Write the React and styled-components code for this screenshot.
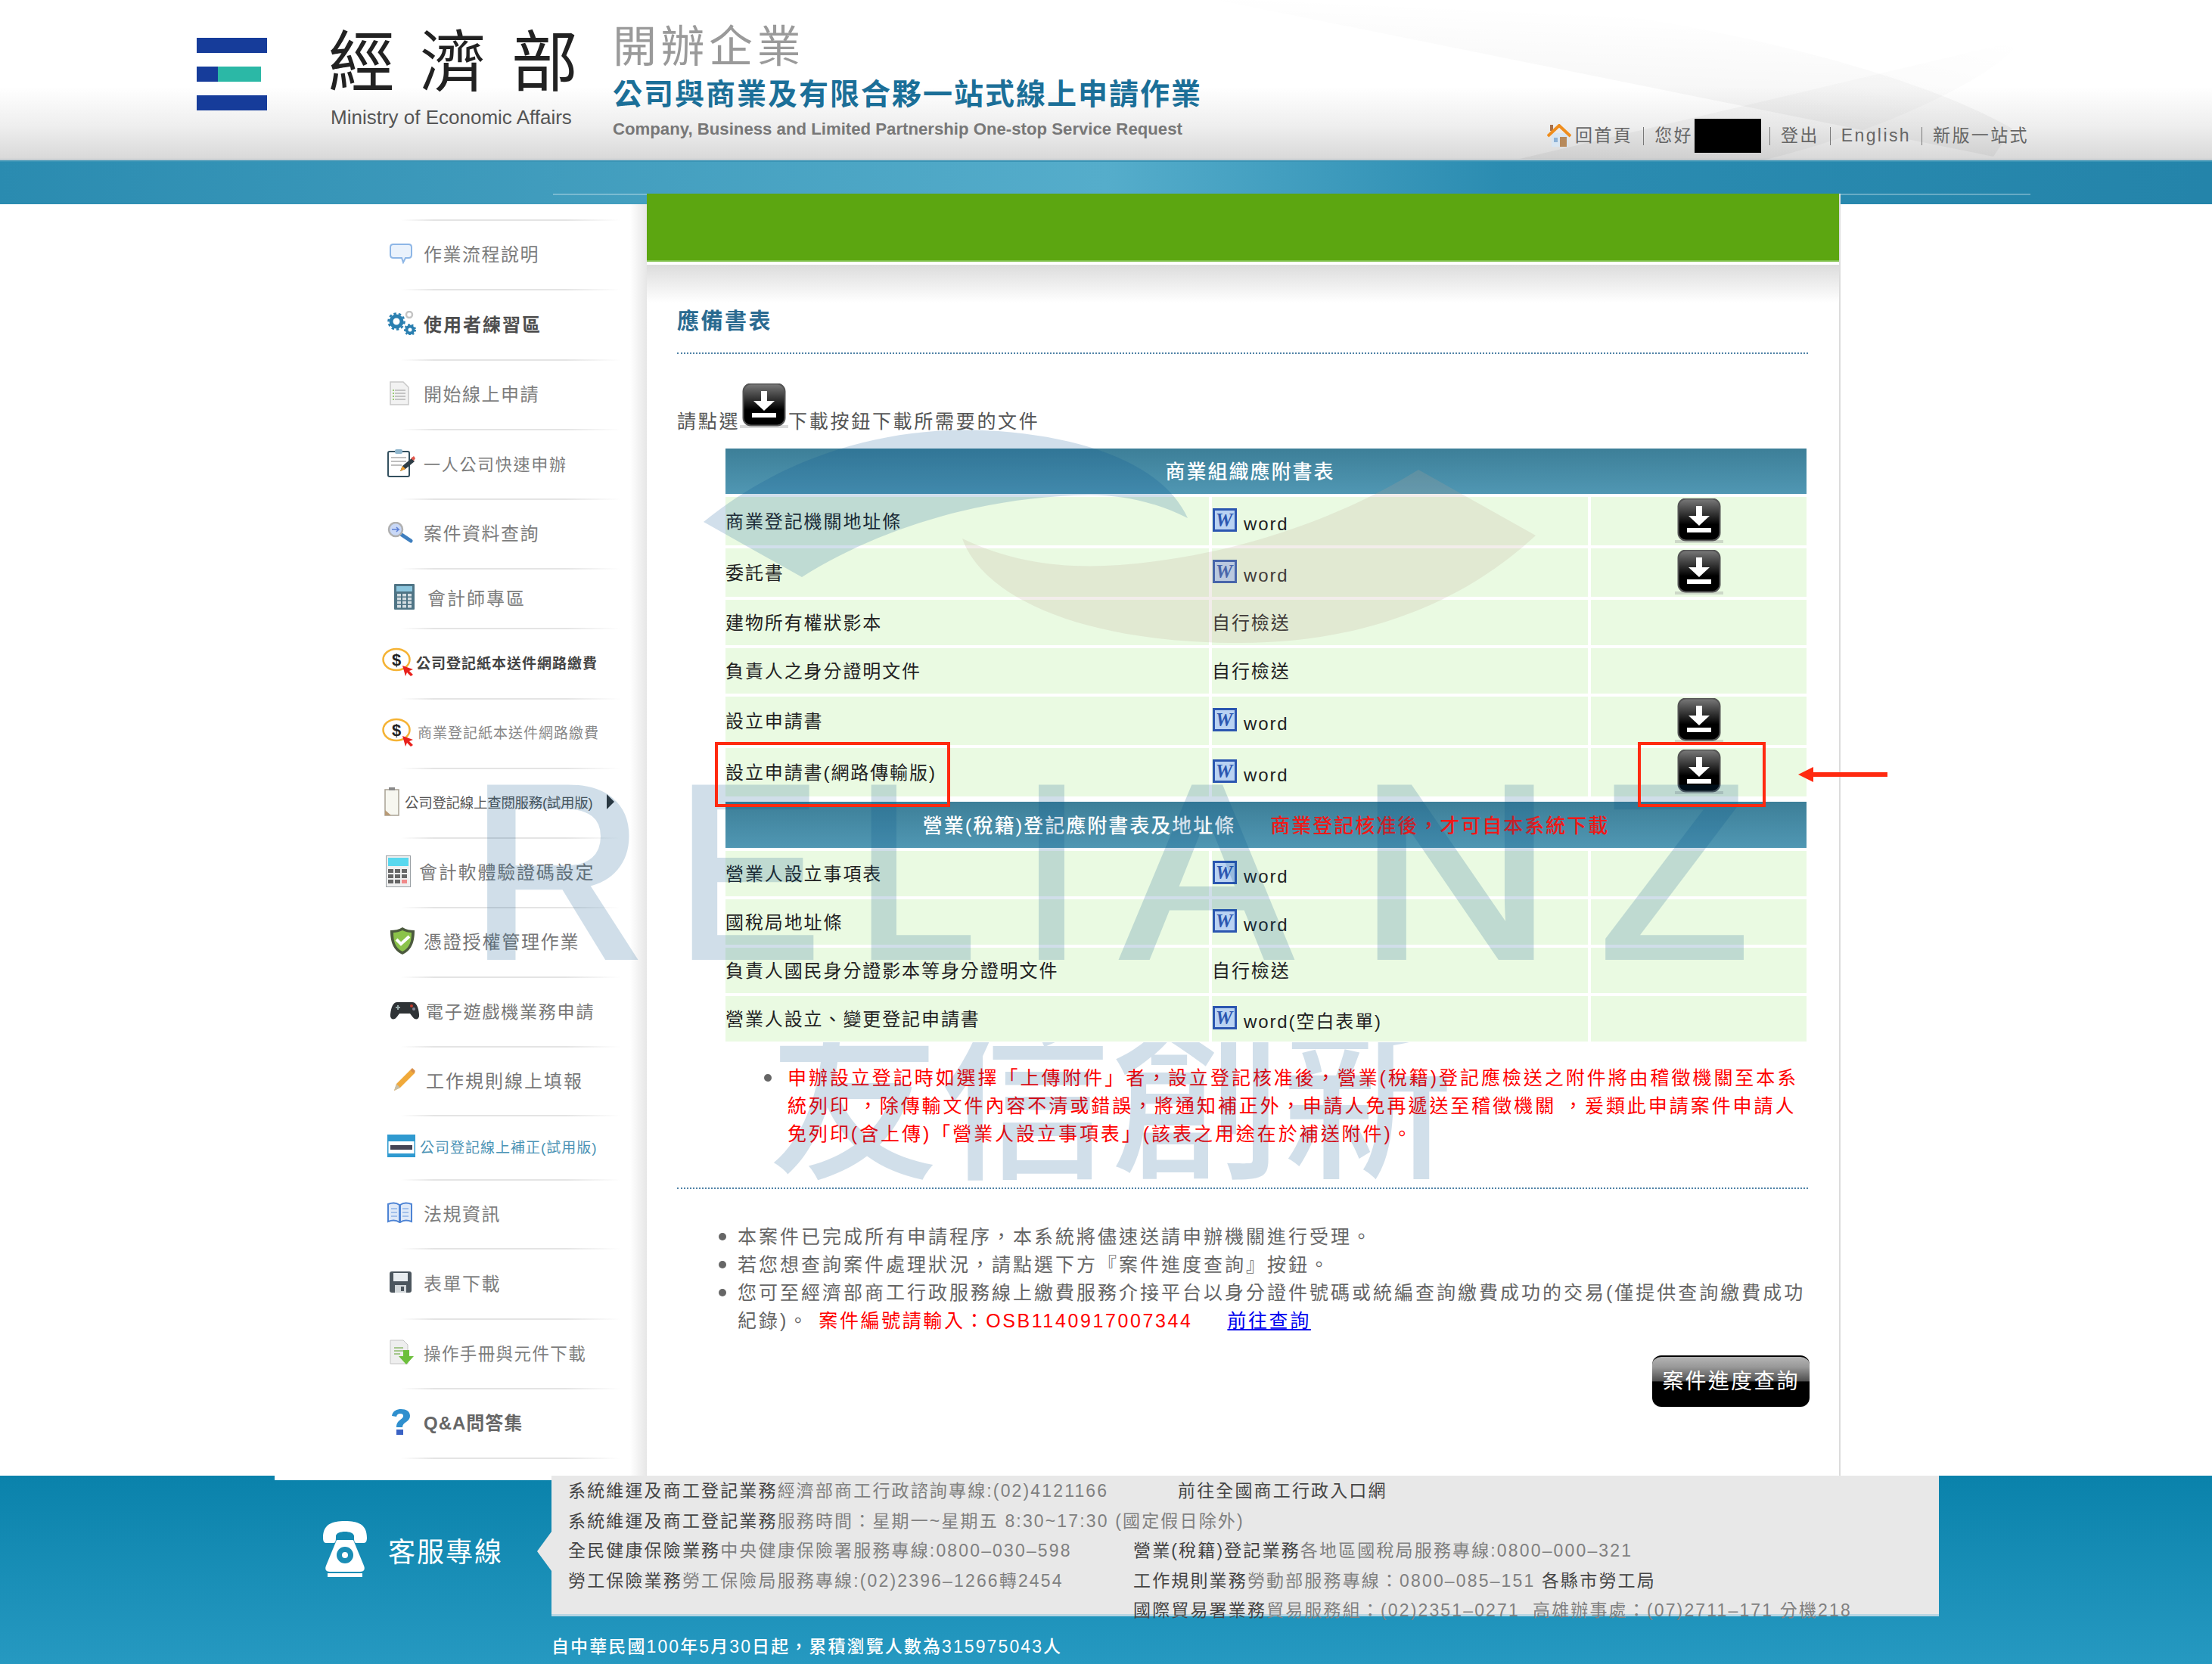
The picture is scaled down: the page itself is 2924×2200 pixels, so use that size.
import React from 'react'
import styled, { createGlobalStyle } from 'styled-components'

const CJK = '"Liberation Sans", "Noto Sans CJK TC", sans-serif'

const GlobalStyle = createGlobalStyle`
  html, body {
    margin: 0;
    padding: 0;
    background: #fff;
    font-family: ${CJK};
  }
  * {
    box-sizing: border-box;
  }
`

const Page = styled.div`
  position: relative;
  width: 2924px;
  height: 2200px;
  overflow: hidden;
  background: #fff;
`

/* ---- header ---- */
const Header = styled.header`
  position: relative;
  display: flex;
  height: 212px;
  padding-left: 260px;
  background: linear-gradient(#fff 0, #fff 115px, #eeeeee 168px, #d9d9d9 209px, #bcc8ce 212px);
`

const Streaks = styled.svg`
  position: absolute;
  top: 0;
  left: 0;
`

const LogoMark = styled.div`
  position: relative;
  display: flex;
  flex-direction: column;
  gap: 18px;
  width: 93px;
  margin-right: 84px;
  padding-top: 50px;
`

const LogoBar = styled.div`
  height: 20px;
  width: ${(p) => (p.$short ? '85px' : '93px')};
  background: ${(p) =>
    p.$short ? 'linear-gradient(90deg, #163c9a 0 28px, #2bb8a6 28px)' : '#163c9a'};
`

const MinistryCol = styled.div`
  position: relative;
  width: 373px;
  padding-top: 40px;
`

const MinistryName = styled.div`
  margin-left: -3px;
  font-size: 88px;
  line-height: 85px;
  letter-spacing: 33px;
  font-weight: 400;
  color: #222;
  white-space: nowrap;
`

const MinistryEn = styled.div`
  margin-top: 18px;
  font-size: 26px;
  line-height: 25px;
  color: #555;
  white-space: nowrap;
`

const ServiceCol = styled.div`
  position: relative;
  padding-top: 33px;
`

const ServiceTag = styled.div`
  font-size: 58px;
  line-height: 57px;
  letter-spacing: 5.5px;
  color: #9a9a9a;
  white-space: nowrap;
`

const ServiceTitle = styled.div`
  margin-top: 15px;
  font-size: 39px;
  line-height: 40px;
  letter-spacing: 2px;
  font-weight: 700;
  color: #1b6f98;
  white-space: nowrap;
`

const ServiceEn = styled.div`
  margin-top: 15px;
  font-size: 22.2px;
  line-height: 22px;
  font-weight: 700;
  color: #777;
  white-space: nowrap;
`

const TopNav = styled.nav`
  position: relative;
  display: flex;
  align-items: center;
  margin-left: auto;
  align-self: flex-end;
  padding: 0 242px 10px 0;
  font-size: 23px;
  line-height: 30px;
  letter-spacing: 2.4px;
  color: #666;
  white-space: nowrap;

  & > span:not(:empty) {
    position: relative;
    top: -1px;
  }
`

const NavIcon = styled.span`
  display: flex;
  margin-right: 5px;
`

const NavSep = styled.span`
  width: 1px;
  height: 24px;
  margin: 0 14px;
  background: #777;
`

const HiddenName = styled.span`
  width: 88px;
  height: 45px;
  margin-left: 2px;
  margin-right: -3px;
  background: #000;
`

const BlueBar = styled.div`
  height: 58px;
  padding: 42px 0 0 731px;
  background: linear-gradient(90deg, #2a8bb0 0, #45a0c0 30%, #55adcb 50%, #2b8cb1 68%, #2484aa 100%);
  border-top: 2px solid #3a94b5;
`

const BarShine = styled.div`
  width: 1953px;
  height: 2px;
  background: rgba(255, 255, 255, 0.3);
`

/* ---- body ---- */
const Body = styled.div`
  display: flex;
  height: 1695px;
  margin-top: -14px;
  padding-left: 363px;
`

const Sidebar = styled.aside`
  width: 492px;
  margin-top: 14px;
  padding-top: 20px;
  background: linear-gradient(90deg, #fff 0, #fff 470px, #e6e6e6 492px);
`

const MENU_LINE = `linear-gradient(90deg, rgba(228,228,228,0), #e4e4e4 15%, #e4e4e4 75%, rgba(228,228,228,0))`

const MenuRule = styled.div`
  height: 2px;
  background: ${MENU_LINE} no-repeat 167px 0 / 290px 2px;
`

const MenuRow = styled.div`
  display: flex;
  align-items: center;
  height: ${(p) => p.$h}px;
  padding-left: ${(p) => p.$iconX - 363}px;
  padding-bottom: 7px;
  background: ${MENU_LINE} no-repeat 167px bottom / 290px 2px;
`

const MenuIcon = styled.div`
  display: flex;
  align-items: center;
  width: ${(p) => p.$w}px;
  flex-shrink: 0;
`

const MenuLabel = styled.span`
  font-size: ${(p) => p.$size}px;
  letter-spacing: ${(p) => p.$ls}px;
  font-weight: ${(p) => (p.$bold ? 700 : 400)};
  color: ${(p) => p.$color};
  white-space: nowrap;
`

const MoreArrow = styled.span`
  width: 0;
  height: 0;
  margin-left: 19px;
  border-left: 10px solid #333;
  border-top: 10px solid transparent;
  border-bottom: 10px solid transparent;
`

const Main = styled.main`
  display: flex;
  flex-direction: column;
  width: 1578px;
  background: #fff;
  border-right: 2px solid #dcdcdc;
`

const GreenBar = styled.div`
  height: 90px;
  background: #5ca611;
  border-bottom: 2px solid #7fc04a;
`

const GreyFade = styled.div`
  height: 50px;
  margin-top: 4px;
  background: linear-gradient(#dcdcdc, #fff);
`

const Content = styled.div`
  padding: 0 41px 0 40px;
`

const PageTitle = styled.h2`
  margin: 7px 0 0;
  padding-bottom: 23px;
  font-size: 29px;
  line-height: 36px;
  letter-spacing: 2.5px;
  font-weight: 700;
  color: #2a6a90;
  border-bottom: 2px dotted #4f82a6;
`

const Instruction = styled.div`
  display: flex;
  align-items: flex-end;
  height: 67px;
  margin-top: 38px;
  font-size: 25px;
  line-height: 32px;
  letter-spacing: 2.7px;
  color: #555;
`

const InstructionIcon = styled.span`
  display: flex;
  align-self: flex-start;
  margin: 1px 0 0 0;
`

const FormGrid = styled.div`
  display: grid;
  grid-template-columns: 639px 497px 285px;
  column-gap: 4px;
  row-gap: 4px;
  width: 1429px;
  margin: 20px 0 0 64px;
`

const GroupHead = styled.div`
  grid-column: 1 / -1;
  display: flex;
  align-items: center;
  justify-content: center;
  gap: 46px;
  height: ${(p) => p.$h}px;
  margin-top: ${(p) => p.$top || 0}px;
  padding-right: ${(p) => p.$shift || 0}px;
  padding-bottom: 3px;
  font-size: 26px;
  letter-spacing: 2px;
  font-weight: 500;
  color: #fff;
  background: linear-gradient(#3d7f98, #5097b3);
`

const HeadAlert = styled.span`
  color: #f01818;
`

const Cell = styled.div`
  display: flex;
  align-items: center;
  justify-content: ${(p) => (p.$center ? 'center' : 'flex-start')};
  height: ${(p) => p.$h}px;
  padding-bottom: ${(p) => (p.$center ? 0 : 3)}px;
  font-size: 24px;
  letter-spacing: 1.9px;
  color: #222;
  background: #eafae2;
  white-space: nowrap;
`

const WordLink = styled.span`
  display: flex;
  align-items: flex-end;
  gap: 9px;
  padding-left: 1px;
  line-height: 26px;
`

const WordText = styled.span`
  position: relative;
  top: 3px;
`

const Bulleted = styled.li`
  position: relative;
  list-style: none;

  &::before {
    content: '';
    position: absolute;
    top: 13px;
    left: ${(p) => p.$bullet}px;
    width: 10px;
    height: 10px;
    border-radius: 50%;
    background: #666;
  }
`

const RedNote = styled.ul`
  margin: 30px 0 0;
  padding: 0 0 0 146px;
  font-size: 25px;
  line-height: 37px;
  letter-spacing: 2.95px;
  color: #f00;
  white-space: nowrap;
`

const DottedRule = styled.div`
  margin-top: 52px;
  border-bottom: 2px dotted #4f82a6;
`

const NoticeList = styled.ul`
  margin: 45px 0 0;
  padding: 0 0 0 80px;
  font-size: 25px;
  line-height: 37px;
  letter-spacing: 3px;
  color: #666;
  white-space: nowrap;
`

const CaseNo = styled.span`
  margin-left: 12px;
  letter-spacing: 2.6px;
  color: #f00;
`

const QueryLink = styled.a`
  margin-left: 46px;
  letter-spacing: 2.6px;
  color: #00e;
  text-decoration: underline;
`

const ButtonRow = styled.div`
  display: flex;
  justify-content: flex-end;
  margin: 27px -2px 0 0;
`

const ProgressButton = styled.button`
  width: 208px;
  height: 68px;
  padding: 0 0 6px;
  border: 0;
  border-top: 2px solid #000;
  border-radius: 12px;
  font-family: ${CJK};
  font-size: 28px;
  letter-spacing: 2.2px;
  color: #fff;
  background: linear-gradient(#b4b4b4 0, #999 20%, #505050 48%, #000 50%, #000 100%);
`

/* ---- footer ---- */
const Footer = styled.footer`
  height: 249px;
  background: linear-gradient(#0a82ab, #2699c1);
`

const FooterTop = styled.div`
  display: flex;
  padding-left: 363px;
`

const HotlineSide = styled.div`
  width: 366px;
  height: 186px;
  border-top: 6px solid #fff;
`

const HotlineInner = styled.div`
  display: flex;
  align-items: center;
  gap: 26px;
  padding: 52px 0 0 62px;
`

const HotlineLabel = styled.span`
  font-size: 36px;
  letter-spacing: 2px;
  color: #fff;
  white-space: nowrap;
  margin-top: 2px;
`

const InfoBox = styled.div`
  position: relative;
  width: 1834px;
  height: 186px;
  padding: 0 0 0 22px;
  background: #e8e8e8;
  border-bottom: 3px solid #b7d5e2;

  &::before {
    content: '';
    position: absolute;
    top: 74px;
    left: -19px;
    border-right: 19px solid #e8e8e8;
    border-top: 26px solid transparent;
    border-bottom: 26px solid transparent;
  }
`

const InfoRow = styled.div`
  display: grid;
  grid-template-columns: ${(p) => p.$first}px 1fr;
  height: 39.5px;
  padding-bottom: 3px;
  align-items: center;
  font-size: 23px;
  letter-spacing: 2.15px;
  color: #808080;
  white-space: nowrap;
`

const InfoDept = styled.span`
  color: #444;
`

const VisitLine = styled.div`
  margin-top: 26px;
  padding-left: 729px;
  font-size: 23px;
  line-height: 28px;
  letter-spacing: 2.1px;
  font-weight: 500;
  color: #fff;
  white-space: nowrap;
`

/* ---- things lying over the page ---- */
const Watermark = styled.svg`
  position: absolute;
  top: 0;
  left: 0;
  pointer-events: none;
`

const MarkBox = styled.div`
  position: absolute;
  left: ${(p) => p.$x}px;
  top: 981px;
  width: ${(p) => p.$w}px;
  height: 86px;
  border: 4px solid #ff2a10;
  pointer-events: none;
`

const MarkArrow = styled.svg`
  position: absolute;
  left: 2377px;
  top: 1012px;
`

/* ---- drawings ---- */
let uid = 0
const DownloadIcon = () => {
  const id = `dl${uid++}`
  return (
    <svg width="64" height="60" viewBox="0 0 64 60">
      <defs>
        <linearGradient id={id} x1="0" y1="0" x2="0" y2="1">
          <stop offset="0" stopColor="#7a7a7a" />
          <stop offset="0.62" stopColor="#000" />
          <stop offset="1" stopColor="#000" />
        </linearGradient>
      </defs>
      <rect x="0" y="55" width="64" height="4" fill="#999" opacity="0.35" />
      <rect x="4.5" y="0.5" width="55" height="55" rx="10" fill={`url(#${id})`} stroke="#555" strokeWidth="2" />
      <path d="M28 10h8v13h10L32 36 18 23h10z" fill="#fff" />
      <rect x="16" y="39" width="32" height="6" fill="#fff" />
    </svg>
  )
}

const WordIcon = () => (
  <svg width="32" height="31" viewBox="0 0 32 31">
    <rect x="0" y="0" width="32" height="31" fill="#2b56b0" />
    <rect x="3" y="3" width="26" height="25" fill="#b9d2f2" />
    <text x="16" y="24" textAnchor="middle" fontFamily="Liberation Serif, serif" fontStyle="italic" fontWeight="700" fontSize="25" fill="#2b56b0">W</text>
  </svg>
)

const HomeIcon = () => (
  <svg width="32" height="30" viewBox="0 0 32 30">
    <rect x="6" y="12" width="22" height="18" fill="#d9e6f2" />
    <rect x="17" y="17" width="9" height="13" fill="#b78a5c" />
    <rect x="9" y="18" width="5" height="6" fill="#8db2d6" />
    <rect x="4" y="1" width="4" height="8" fill="#a9714a" />
    <path d="M1 16L16 2l15 14" fill="none" stroke="#ef8d1d" strokeWidth="4" />
  </svg>
)

const PhoneIcon = () => (
  <svg width="62" height="77" viewBox="0 0 62 77">
    <path d="M2 24C2 6 14 2 31 2s29 4 29 22c0 4-1 7-4 7H46c-3 0-3-4-3-9 0-4-6-6-12-6s-12 2-12 6c0 5 0 9-3 9H6c-3 0-4-3-4-7z" fill="#fff" />
    <path d="M20 27h22l14 34c2 5 0 8-5 8H11c-5 0-7-3-5-8z" fill="#fff" />
    <circle cx="31" cy="47" r="11" fill="#1a8db5" />
    <circle cx="31" cy="47" r="4" fill="#fff" />
    <rect x="8" y="71" width="46" height="5" fill="#fff" />
  </svg>
)

const Bubble = () => (
  <svg width="30" height="28" viewBox="0 0 30 28">
    <path d="M5 2h20c3 0 4 2 4 4v10c0 2-1 4-4 4h-4l-3 6-2-6H5c-3 0-4-2-4-4V6c0-2 1-4 4-4z" fill="#eaf2fc" stroke="#8db6e6" strokeWidth="2" />
  </svg>
)
const Gears = () => (
  <svg width="40" height="32" viewBox="0 0 40 32">
    <circle cx="12" cy="14" r="7" fill="none" stroke="#2a7fb0" strokeWidth="5" />
    <circle cx="12" cy="14" r="10.5" fill="none" stroke="#2a7fb0" strokeWidth="2.5" strokeDasharray="3.5 3" />
    <circle cx="30" cy="25" r="4.5" fill="none" stroke="#2a7fb0" strokeWidth="4" />
    <circle cx="30" cy="25" r="7" fill="none" stroke="#2a7fb0" strokeWidth="2" strokeDasharray="2.5 2.5" />
    <circle cx="29" cy="5" r="4" fill="none" stroke="#c4c4c4" strokeWidth="2.5" />
  </svg>
)
const DocLines = () => (
  <svg width="26" height="32" viewBox="0 0 26 32">
    <path d="M1 1h17l7 7v23H1z" fill="#f2f2f2" stroke="#c9c9c9" strokeWidth="1.5" />
    <path d="M7 12h14M7 16h14M7 20h14M7 24h14" stroke="#b5b5b5" strokeWidth="1.5" />
    <path d="M4 12h2M4 16h2M4 20h2M4 24h2" stroke="#7cc04a" strokeWidth="1.5" />
  </svg>
)
const ClipPen = () => (
  <svg width="38" height="38" viewBox="0 0 38 38">
    <rect x="1" y="4" width="28" height="33" rx="2" fill="#fff" stroke="#33505f" strokeWidth="2" />
    <rect x="10" y="1" width="10" height="6" rx="2" fill="#8fb5cc" />
    <path d="M5 12h20M5 17h20M5 22h14" stroke="#aaa" strokeWidth="1.5" />
    <path d="M17 30l3-7 12-10 4 4-12 10z" fill="#2e3d46" />
    <path d="M31 13l4-3 2 3-2 3z" fill="#e0554a" />
    <path d="M17 30l3-7 4 4z" fill="#ef9d2f" />
  </svg>
)
const Magnifier = () => (
  <svg width="34" height="28" viewBox="0 0 34 28">
    <path d="M19 17l12 8" stroke="#3f7fbf" strokeWidth="5" strokeLinecap="round" />
    <circle cx="11" cy="10" r="9" fill="#c9d8f6" stroke="#b0b0b0" strokeWidth="2.5" />
    <path d="M6 10h9l-3-3M15 10l-3 3" fill="none" stroke="#5b7fd6" strokeWidth="1.5" />
  </svg>
)
const Calculator = () => (
  <svg width="27" height="34" viewBox="0 0 27 34">
    <rect width="27" height="34" rx="1" fill="#4f7485" />
    <rect x="3" y="3" width="21" height="7" fill="#8cc6de" />
    {[13, 18, 23, 28].map((y) =>
      [4, 11, 18].map((x) => <rect key={`${x}${y}`} x={x} y={y} width="5" height="3.5" fill="#d4dde2" />)
    )}
  </svg>
)
const DollarClick = () => (
  <svg width="44" height="38" viewBox="0 0 44 38">
    <ellipse cx="19" cy="16" rx="17.5" ry="14" fill="#fff" stroke="#f5b335" strokeWidth="2.5" />
    <text x="19" y="24" textAnchor="middle" fontFamily="Liberation Sans, sans-serif" fontWeight="700" fontSize="22" fill="#222">$</text>
    <path d="M27 24l14 5-5 2 5 5-3 2-5-5-2 5z" fill="#e8201c" />
  </svg>
)
const PaperNote = () => (
  <svg width="20" height="38" viewBox="0 0 20 38">
    <rect x="1" y="3" width="18" height="34" fill="#f7f7f0" stroke="#a9a294" strokeWidth="1.5" />
    <path d="M1 37V30l8 7z" fill="#b89a76" />
    <rect x="6" y="0" width="8" height="4" fill="#8a8a8a" />
  </svg>
)
const Keypad = () => (
  <svg width="33" height="42" viewBox="0 0 33 42">
    <rect x="0.5" y="0.5" width="32" height="41" fill="#f0f0f0" stroke="#9aa0a5" />
    <rect x="3" y="3" width="27" height="11" fill="#59d8ee" />
    {[18, 25, 32].map((y) =>
      [3, 12, 21].map((x) => <rect key={`${x}${y}`} x={x} y={y} width="7" height="5" fill={y === 32 && x === 21 ? '#f08a8a' : '#666'} />)
    )}
  </svg>
)
const ShieldCheck = () => (
  <svg width="34" height="38" viewBox="0 0 34 38">
    <path d="M17 1c5 3 10 4 16 4 0 14-3 26-16 32C4 31 1 19 1 5c6 0 11-1 16-4z" fill="#4c5a3e" />
    <path d="M17 5c4 2 8 3 12 3 0 11-2 20-12 25C7 28 5 19 5 8c4 0 8-1 12-3z" fill="#8bc34a" />
    <path d="M9 17l6 6 11-10" fill="none" stroke="#fff" strokeWidth="4" />
  </svg>
)
const GamePad = () => (
  <svg width="38" height="26" viewBox="0 0 38 26">
    <path d="M9 2h20c5 0 8 6 9 16 1 7-5 9-9 3l-3-4H12l-3 4c-4 6-10 4-9-3C1 8 4 2 9 2z" fill="#2f3336" />
    <path d="M7 9h6M10 6v6" stroke="#9aa" strokeWidth="2" />
    <circle cx="28" cy="7" r="2" fill="#c0392b" />
    <circle cx="31" cy="11" r="2" fill="#889" />
  </svg>
)
const Pencil = () => (
  <svg width="30" height="32" viewBox="0 0 30 32">
    <path d="M1 31l3-9 18-18 7 3-20 20z" fill="#f0a93a" />
    <path d="M1 31l3-9 5 5z" fill="#c9c0a8" />
    <path d="M22 4l3-3 4 4-2 3z" fill="#d9904a" />
  </svg>
)
const WwwBar = () => (
  <svg width="37" height="30" viewBox="0 0 37 30">
    <rect x="0.5" y="0.5" width="36" height="29" fill="#fff" stroke="#2f9ad0" strokeWidth="2" />
    <rect x="0" y="0" width="37" height="9" fill="#2f9ad0" />
    <rect x="4" y="14" width="29" height="6" fill="#445" />
    <rect x="0" y="25" width="37" height="5" fill="#2f9ad0" />
  </svg>
)
const BookIcon = () => (
  <svg width="33" height="28" viewBox="0 0 33 28">
    <path d="M1 3c5-2 11-2 15 1v23c-4-3-10-3-15-1zM32 3c-5-2-11-2-15 1v23c4-3 10-3 15-1z" fill="#dfe9f8" stroke="#4d83d4" strokeWidth="2" />
    <path d="M5 9h8M5 14h8M5 19h8M20 9h8M20 14h8M20 19h8" stroke="#8fb2e6" strokeWidth="1.5" />
  </svg>
)
const Floppy = () => (
  <svg width="29" height="28" viewBox="0 0 29 28">
    <rect width="29" height="28" rx="3" fill="#4c565e" />
    <rect x="5" y="2" width="19" height="11" fill="#e9edf0" />
    <rect x="7" y="18" width="15" height="10" fill="#d2d7da" />
    <rect x="15" y="20" width="4" height="6" fill="#4c565e" />
  </svg>
)
const DocDown = () => (
  <svg width="33" height="33" viewBox="0 0 33 33">
    <path d="M1 1h17l6 6v25H1z" fill="#eee" stroke="#c4c4c4" />
    <path d="M6 11h12M6 15h12M6 19h8" stroke="#8dbb6c" strokeWidth="1.5" />
    <path d="M18 14h8v8h6L22 33 12 22h6z" fill="#6dbf3c" />
  </svg>
)
const Question = () => (
  <svg width="28" height="36" viewBox="0 0 28 36">
    <path d="M3 10C4 3 10 1 15 1c7 0 12 3 12 9 0 8-10 8-10 15H9c0-10 9-10 9-15 0-2-1-3-4-3-3 0-4 1-5 4z" fill="#2f8fce" />
    <rect x="9" y="28" width="9" height="7" fill="#3a62c4" />
  </svg>
)

const MENU = [
  { h: 92, x: 515, w: 45, size: 24, ls: 1.5, color: '#7d7d7d', icon: <Bubble />, label: '作業流程說明' },
  { h: 93, x: 512, w: 48, size: 24, ls: 2, color: '#4d4d4d', bold: true, icon: <Gears />, label: '使用者練習區' },
  { h: 92, x: 515, w: 45, size: 24, ls: 1.5, color: '#7d7d7d', icon: <DocLines />, label: '開始線上申請' },
  { h: 92, x: 512, w: 48, size: 22, ls: 1.7, color: '#7d7d7d', icon: <ClipPen />, label: '一人公司快速申辦' },
  { h: 92, x: 512, w: 48, size: 24, ls: 1.5, color: '#7d7d7d', icon: <Magnifier />, label: '案件資料查詢' },
  { h: 79, x: 521, w: 44, size: 24, ls: 2, color: '#7d7d7d', icon: <Calculator />, label: '會計師專區' },
  { h: 93, x: 505, w: 45, size: 19, ls: 1, color: '#444', bold: true, icon: <DollarClick />, label: '公司登記紙本送件網路繳費' },
  { h: 92, x: 505, w: 47, size: 19, ls: 1, color: '#888', icon: <DollarClick />, label: '商業登記紙本送件網路繳費' },
  { h: 92, x: 508, w: 27, size: 18.5, ls: -0.3, color: '#555', icon: <PaperNote />, label: '公司登記線上查閱服務(試用版)', more: true },
  { h: 92, x: 510, w: 44, size: 24, ls: 1.8, color: '#777', icon: <Keypad />, label: '會計軟體驗證碼設定' },
  { h: 92, x: 515, w: 45, size: 24, ls: 1.8, color: '#777', icon: <ShieldCheck />, label: '憑證授權管理作業' },
  { h: 92, x: 516, w: 47, size: 23, ls: 1.8, color: '#777', icon: <GamePad />, label: '電子遊戲機業務申請' },
  { h: 91, x: 520, w: 43, size: 24, ls: 2, color: '#777', icon: <Pencil />, label: '工作規則線上填報' },
  { h: 85, x: 512, w: 43, size: 19, ls: 1, color: '#4b93b5', icon: <WwwBar />, label: '公司登記線上補正(試用版)' },
  { h: 91, x: 512, w: 48, size: 24, ls: 1.5, color: '#7d7d7d', icon: <BookIcon />, label: '法規資訊' },
  { h: 93, x: 515, w: 45, size: 24, ls: 1.5, color: '#7d7d7d', icon: <Floppy />, label: '表單下載' },
  { h: 92, x: 515, w: 45, size: 22.5, ls: 1.4, color: '#7d7d7d', icon: <DocDown />, label: '操作手冊與元件下載' },
  { h: 92, x: 515, w: 45, size: 24, ls: 1, color: '#666', bold: true, icon: <Question />, label: 'Q&A問答集' },
]

const COMPANY_FORMS = [
  { h: 64, name: '商業登記機關地址條', file: 'word', dl: true },
  { h: 64, name: '委託書', file: 'word', dl: true },
  { h: 60, name: '建物所有權狀影本', file: '自行檢送' },
  { h: 60, name: '負責人之身分證明文件', file: '自行檢送' },
  { h: 64, name: '設立申請書', file: 'word', dl: true },
  { h: 64, name: '設立申請書(網路傳輸版)', file: 'word', dl: true },
]

const TAX_FORMS = [
  { h: 60, name: '營業人設立事項表', file: 'word' },
  { h: 60, name: '國稅局地址條', file: 'word' },
  { h: 60, name: '負責人國民身分證影本等身分證明文件', file: '自行檢送' },
  { h: 60, name: '營業人設立、變更登記申請書', file: 'word(空白表單)' },
]

// big letters behind the page: [letter, x, width]
const WATERMARK_LETTERS = [
  ['R', 622, 229],
  ['E', 895, 189],
  ['L', 1132, 157],
  ['I', 1350, 80],
  ['A', 1484, 222],
  ['N', 1796, 256],
  ['Z', 2116, 195],
]

const FormRow = ({ row }) => (
  <>
    <Cell $h={row.h}>{row.name}</Cell>
    <Cell $h={row.h}>
      {row.file.startsWith('word') ? (
        <WordLink>
          <WordIcon />
          <WordText>{row.file}</WordText>
        </WordLink>
      ) : (
        row.file
      )}
    </Cell>
    <Cell $h={row.h} $center>
      {row.dl && <DownloadIcon />}
    </Cell>
  </>
)

const App = () => {
  return (
    <Page>
      <GlobalStyle />
      <Header>
        <Streaks width="2924" height="212" viewBox="0 0 2924 212">
          <defs>
            <linearGradient id="streakA" x1="0.45" y1="0.75" x2="0.6" y2="0.1">
              <stop offset="0" stopColor="#000" stopOpacity="0.045" />
              <stop offset="1" stopColor="#000" stopOpacity="0" />
            </linearGradient>
            <linearGradient id="streakB" x1="0" y1="1" x2="1" y2="0">
              <stop offset="0" stopColor="#000" stopOpacity="0.05" />
              <stop offset="1" stopColor="#000" stopOpacity="0" />
            </linearGradient>
          </defs>
          <path d="M1609 0L2635 207 2660 170C2500 80 2200 20 1981 0z" fill="url(#streakA)" />
          <path d="M2009 210L2672 53C2640 100 2500 170 2330 212z" fill="url(#streakB)" />
        </Streaks>
        <LogoMark>
          <LogoBar />
          <LogoBar $short />
          <LogoBar />
        </LogoMark>
        <MinistryCol>
          <MinistryName>經濟部</MinistryName>
          <MinistryEn>Ministry of Economic Affairs</MinistryEn>
        </MinistryCol>
        <ServiceCol>
          <ServiceTag>開辦企業</ServiceTag>
          <ServiceTitle>公司與商業及有限合夥一站式線上申請作業</ServiceTitle>
          <ServiceEn>Company, Business and Limited Partnership One-stop Service Request</ServiceEn>
        </ServiceCol>
        <TopNav>
          <NavIcon>
            <HomeIcon />
          </NavIcon>
          <span>回首頁</span>
          <NavSep />
          <span>您好</span>
          <HiddenName />
          <NavSep />
          <span>登出</span>
          <NavSep />
          <span>English</span>
          <NavSep />
          <span>新版一站式</span>
        </TopNav>
      </Header>
      <BlueBar>
        <BarShine />
      </BlueBar>

      <Body>
        <Sidebar>
          <MenuRule />
          {MENU.map((item) => (
            <MenuRow key={item.label} $h={item.h} $iconX={item.x}>
              <MenuIcon $w={item.w}>{item.icon}</MenuIcon>
              <MenuLabel $size={item.size} $ls={item.ls} $color={item.color} $bold={item.bold}>
                {item.label}
              </MenuLabel>
              {item.more && <MoreArrow />}
            </MenuRow>
          ))}
        </Sidebar>

        <Main>
          <GreenBar />
          <GreyFade />
          <Content>
            <PageTitle>應備書表</PageTitle>
            <Instruction>
              <span>請點選</span>
              <InstructionIcon>
                <DownloadIcon />
              </InstructionIcon>
              <span>下載按鈕下載所需要的文件</span>
            </Instruction>

            <FormGrid>
              <GroupHead $h={60} $shift={42}>
                商業組織應附書表
              </GroupHead>
              {COMPANY_FORMS.map((row) => (
                <FormRow key={row.name} row={row} />
              ))}
              <GroupHead $h={61} $top={3}>
                <span>營業(稅籍)登記應附書表及地址條</span>
                <HeadAlert>商業登記核准後，才可自本系統下載</HeadAlert>
              </GroupHead>
              {TAX_FORMS.map((row) => (
                <FormRow key={row.name} row={row} />
              ))}
            </FormGrid>

            <RedNote>
              <Bulleted $bullet={-31}>
                申辦設立登記時如選擇「上傳附件」者，設立登記核准後，營業(稅籍)登記應檢送之附件將由稽徵機關至本系
                <br />
                統列印 ，除傳輸文件內容不清或錯誤，將通知補正外，申請人免再遞送至稽徵機關 ，爰類此申請案件申請人
                <br />
                免列印(含上傳)「營業人設立事項表」(該表之用途在於補送附件)。
              </Bulleted>
            </RedNote>
            <DottedRule />

            <NoticeList>
              <Bulleted $bullet={-25}>本案件已完成所有申請程序，本系統將儘速送請申辦機關進行受理。</Bulleted>
              <Bulleted $bullet={-25}>若您想查詢案件處理狀況，請點選下方『案件進度查詢』按鈕。</Bulleted>
              <Bulleted $bullet={-25}>
                您可至經濟部商工行政服務線上繳費服務介接平台以身分證件號碼或統編查詢繳費成功的交易(僅提供查詢繳費成功
                <br />
                紀錄)。
                <CaseNo>案件編號請輸入：OSB1140917007344</CaseNo>
                <QueryLink href="#">前往查詢</QueryLink>
              </Bulleted>
            </NoticeList>

            <ButtonRow>
              <ProgressButton>案件進度查詢</ProgressButton>
            </ButtonRow>
          </Content>
        </Main>
      </Body>

      <Footer>
        <FooterTop>
          <HotlineSide>
            <HotlineInner>
              <PhoneIcon />
              <HotlineLabel>客服專線</HotlineLabel>
            </HotlineInner>
          </HotlineSide>
          <InfoBox>
            <InfoRow $first={806}>
              <span>
                <InfoDept>系統維運及商工登記業務</InfoDept>經濟部商工行政諮詢專線:(02)4121166
              </span>
              <InfoDept>前往全國商工行政入口網</InfoDept>
            </InfoRow>
            <InfoRow $first={1500}>
              <span>
                <InfoDept>系統維運及商工登記業務</InfoDept>服務時間：星期一~星期五 8:30~17:30 (國定假日除外)
              </span>
            </InfoRow>
            <InfoRow $first={747}>
              <span>
                <InfoDept>全民健康保險業務</InfoDept>中央健康保險署服務專線:0800–030–598
              </span>
              <span>
                <InfoDept>營業(稅籍)登記業務</InfoDept>各地區國稅局服務專線:0800–000–321
              </span>
            </InfoRow>
            <InfoRow $first={747}>
              <span>
                <InfoDept>勞工保險業務</InfoDept>勞工保險局服務專線:(02)2396–1266轉2454
              </span>
              <span>
                <InfoDept>工作規則業務</InfoDept>勞動部服務專線：0800–085–151 <InfoDept>各縣市勞工局</InfoDept>
              </span>
            </InfoRow>
            <InfoRow $first={747}>
              <span />
              <span>
                <InfoDept>國際貿易署業務</InfoDept>貿易服務組：(02)2351–0271 &nbsp;高雄辦事處：(07)2711–171 分機218
              </span>
            </InfoRow>
          </InfoBox>
        </FooterTop>
        <VisitLine>自中華民國100年5月30日起，累積瀏覽人數為315975043人</VisitLine>
      </Footer>

      <Watermark width="2924" height="2200" viewBox="0 0 2924 2200">
        <defs>
          <clipPath id="wmClip">
            <rect x="900" y="1378" width="1100" height="300" />
          </clipPath>
        </defs>
        <path d="M930 690C1040 600 1180 560 1320 570 1450 580 1540 620 1570 685 1520 660 1470 652 1420 655 1290 660 1160 700 1060 763z" fill="#00508f" fillOpacity="0.18" />
        <path d="M1272 712C1340 745 1410 752 1480 747 1640 735 1780 680 1875 621L2030 708C1920 810 1780 850 1640 850 1430 850 1300 790 1272 712z" fill="#bea596" fillOpacity="0.2" />
        <g fontFamily="Liberation Sans, sans-serif" fontSize="325" fill="#00508a" stroke="#00508a" strokeWidth="8" opacity="0.18">
          {WATERMARK_LETTERS.map(([ch, x, len]) => (
            <text key={ch} x={x} y="1265" textLength={len} lengthAdjust="spacingAndGlyphs">
              {ch}
            </text>
          ))}
        </g>
        <g clipPath="url(#wmClip)">
          <text x="1016" y="1540" fontFamily="Noto Sans CJK TC, sans-serif" fontWeight="500" fontSize="230" textLength="905" lengthAdjust="spacingAndGlyphs" fill="#00508a" fillOpacity="0.18">
            友信創新
          </text>
        </g>
      </Watermark>

      <MarkBox $x={945} $w={311} />
      <MarkBox $x={2165} $w={169} />
      <MarkArrow width="118" height="24" viewBox="0 0 118 24">
        <path d="M0 12L20 2v7h98v6H20v7z" fill="#ff2a10" />
      </MarkArrow>
    </Page>
  )
}

export default App
